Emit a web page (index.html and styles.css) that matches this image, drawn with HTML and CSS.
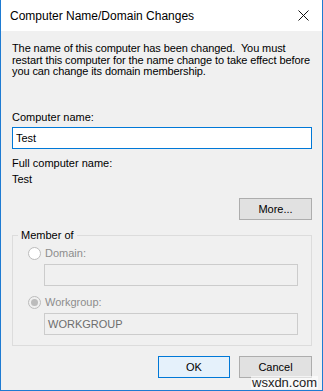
FILE: index.html
```html
<!DOCTYPE html>
<html lang="en">
<head>
  <meta charset="UTF-8" />
  <title>Computer Name/Domain Changes</title>
  <link rel="stylesheet" href="styles.css">
</head>
<body>

  <div class="window">
    <div class="titlebar">
      <span class="title">Computer Name/Domain Changes</span>
      <svg class="close" width="11" height="11" viewBox="0 0 11 11">
        <path d="M0.5 0.5 L10.5 10.5 M10.5 0.5 L0.5 10.5" stroke="#111" stroke-width="1" fill="none"/>
      </svg>
    </div>

    <div class="content">
      <p class="message">The name of this computer has been changed.&nbsp; You must<br>
        restart this computer for the name change to take effect before<br>
        you can change its domain membership.</p>

      <label class="field-label">Computer name:</label>
      <div class="textbox focused">Test</div>

      <div class="field-label full">Full computer name:</div>
      <div class="field-value">Test</div>

      <div class="more-row">
        <button class="btn">More...</button>
      </div>

      <fieldset class="group">
        <legend>Member of</legend>

        <div class="radio-row">
          <span class="radio"></span>
          <span>Domain:</span>
        </div>
        <div class="textbox disabled"></div>

        <div class="radio-row second">
          <span class="radio checked"></span>
          <span>Workgroup:</span>
        </div>
        <div class="textbox disabled">WORKGROUP</div>
      </fieldset>

      <div class="buttons">
        <button class="btn btn-default">OK</button>
        <button class="btn">Cancel</button>
      </div>
    </div>

    <div class="watermark">wsxdn.com</div>
  </div>

</body>
</html>
```

FILE: styles.css
```css
body {
  margin: 0;
  font-family: 'Liberation Sans', Arial, sans-serif;
  font-size: 11px;
  color: #000;
  background: #f0f0f0;
}

.window {
  position: relative;
  width: 323px;
  height: 391px;
  box-sizing: border-box;
  border: 1px solid #1e7bd2;
  border-top: none;
  background: #f0f0f0;
  overflow: hidden;
}

.titlebar {
  height: 31px;
  background: #fff;
  display: flex;
  align-items: center;
  justify-content: space-between;
  padding: 0 9px 0 9px;
}

.title {
  font-size: 12px;
}

.close {
  display: block;
  margin-right: 4px;
}

.content {
  padding: 0 10px 0 11px;
}

.message {
  margin: 12px 0 0;
  line-height: 11.5px;
  letter-spacing: -0.1px;
  white-space: nowrap;
}

.field-label {
  display: block;
  margin-top: 33px;
  line-height: 13px;
}

.field-label.full {
  margin-top: 6px;
  line-height: 16px;
}

.field-value {
  line-height: 16px;
}

.textbox {
  box-sizing: border-box;
  height: 22px;
  margin-top: 3px;
  padding: 0 3px;
  line-height: 20px;
  border: 1px solid #7a7a7a;
  background: #fff;
}

.textbox.focused {
  border-color: #0078d7;
}

.textbox.disabled {
  border-color: #cccccc;
  background: #f0f0f0;
  color: #6d6d6d;
  margin-top: 0;
  margin-left: 30px;
}

.more-row {
  display: flex;
  justify-content: flex-end;
  margin-top: 11px;
}

.btn {
  box-sizing: border-box;
  width: 73px;
  height: 22px;
  padding: 0;
  font-family: inherit;
  font-size: 11px;
  color: #000;
  background: #e1e1e1;
  border: 1px solid #adadad;
}

.btn-default {
  width: 72px;
  background: #e5f1fb;
  border-color: #0078d7;
}

.group {
  margin: 9px 0 0;
  padding: 0 13px 10px 1px;
  border: 1px solid #dcdcdc;
  min-width: 0;
}

.group legend {
  margin-left: 4px;
  padding: 0 3px;
  line-height: 13px;
}

.radio-row {
  display: flex;
  align-items: center;
  gap: 4px;
  height: 13px;
  margin: 5px 0 4px 14px;
  color: #8d8d8d;
}

.radio-row.second {
  margin-top: 10px;
}

.radio {
  box-sizing: border-box;
  width: 13px;
  height: 13px;
  border: 1px solid #bcbcbc;
  border-radius: 50%;
  background: #fff;
  display: flex;
  align-items: center;
  justify-content: center;
}

.radio.checked {
  background: #f0f0f0;
}

.radio.checked::after {
  content: "";
  width: 7px;
  height: 7px;
  border-radius: 50%;
  background: #bcbcbc;
}

.buttons {
  display: flex;
  justify-content: flex-end;
  gap: 9px;
  margin-top: 10px;
}

.watermark {
  position: absolute;
  left: 250px;
  top: 376px;
  padding: 0 1px;
  font-size: 13px;
  line-height: 13px;
  color: #222;
  background: rgba(255, 255, 255, 0.6);
}
```
